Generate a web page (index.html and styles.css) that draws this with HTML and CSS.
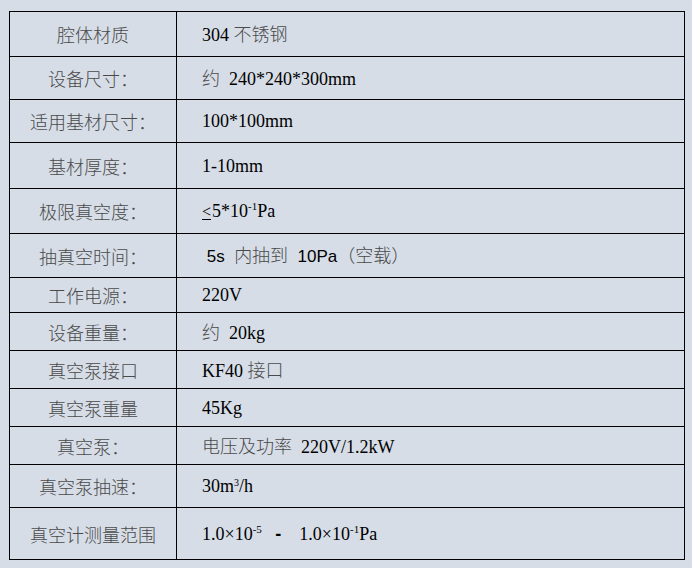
FILE: index.html
```html
<!DOCTYPE html>
<html lang="zh">
<head>
<meta charset="utf-8">
<link rel="stylesheet" href="styles.css">
</head>
<body>
<table class="spec">
  <tr class="r45"><td class="k">腔体材质</td><td class="v">304 <span class="zh">不锈钢</span></td></tr>
  <tr class="r43"><td class="k">设备尺寸：</td><td class="v"><span class="zh">约</span>&nbsp; 240*240*300mm</td></tr>
  <tr class="r43"><td class="k">适用基材尺寸：</td><td class="v">100*100mm</td></tr>
  <tr class="r46"><td class="k">基材厚度：</td><td class="v">1-10mm</td></tr>
  <tr class="r45"><td class="k">极限真空度：</td><td class="v"><span class="le">&lt;</span>5*10<sup class="sup">-1</sup>Pa</td></tr>
  <tr class="r44"><td class="k">抽真空时间：</td><td class="v"><span class="sans">&nbsp;5s&nbsp;&nbsp;</span><span class="zh">内抽到</span><span class="sans">&nbsp;&nbsp;10Pa</span><span class="zh">（空载）</span></td></tr>
  <tr class="r35"><td class="k">工作电源：</td><td class="v">220V</td></tr>
  <tr class="r38"><td class="k">设备重量：</td><td class="v"><span class="zh">约</span>&nbsp; 20kg</td></tr>
  <tr class="r38"><td class="k">真空泵接口</td><td class="v">KF40 <span class="zh">接口</span></td></tr>
  <tr class="r38"><td class="k">真空泵重量</td><td class="v">45Kg</td></tr>
  <tr class="r38"><td class="k">真空泵：</td><td class="v"><span class="zh">电压及功率</span>&nbsp; 220V/1.2kW</td></tr>
  <tr class="r43"><td class="k">真空泵抽速：</td><td class="v">30m<sup class="sup3">3</sup>/h</td></tr>
  <tr class="r52"><td class="k">真空计测量范围</td><td class="v">1.0×10<sup class="sup">-5</sup>&nbsp;&nbsp;&nbsp;<span class="dash">-</span>&nbsp;&nbsp;&nbsp; 1.0×10<sup class="sup">-1</sup>Pa</td></tr>
</table>
</body>
</html>
```

FILE: styles.css
```css
html, body {
  margin: 0;
  padding: 0;
  background: #d6dde7;
}
body {
  width: 692px;
  height: 568px;
  overflow: hidden;
}
.spec {
  margin: 11px 0 0 9px;
  width: 676px;
  border-collapse: collapse;
  table-layout: fixed;
  font-family: "Liberation Serif", "Noto Sans CJK SC", serif;
  font-size: 18px;
  color: #000;
}
.spec td {
  border: 1px solid #000;
  padding: 0;
  vertical-align: middle;
  line-height: 20px;
}
.spec td.k {
  width: 166px;
  text-align: center;
  color: #4a4a4a;
  font-family: "Noto Sans CJK SC", sans-serif;
  font-weight: 300;
}
.spec td.v {
  padding-left: 25px;
  text-align: left;
  white-space: nowrap;
}
.zh {
  font-family: "Noto Sans CJK SC", sans-serif;
  font-weight: 300;
  color: #4a4a4a;
}
.sans {
  font-family: "Liberation Sans", sans-serif;
  font-size: 17px;
}
.dash {
  font-family: "Liberation Sans", sans-serif;
  font-weight: bold;
}
.le {
  display: inline-block;
  font-size: 16px;
  line-height: 14px;
  border-bottom: 1px solid #000;
  margin-right: 1px;
}
.sup {
  font-size: 11px;
  vertical-align: 7px;
  line-height: 0;
}
.sup3 {
  font-size: 10px;
  vertical-align: 6px;
  line-height: 0;
}
.r35 td { height: 34px; }
.r38 td { height: 37px; }
.r43 td { height: 42px; }
.r44 td { height: 43px; }
.r45 td { height: 44px; }
.r46 td { height: 45px; }
.r52 td { height: 51px; }
```
